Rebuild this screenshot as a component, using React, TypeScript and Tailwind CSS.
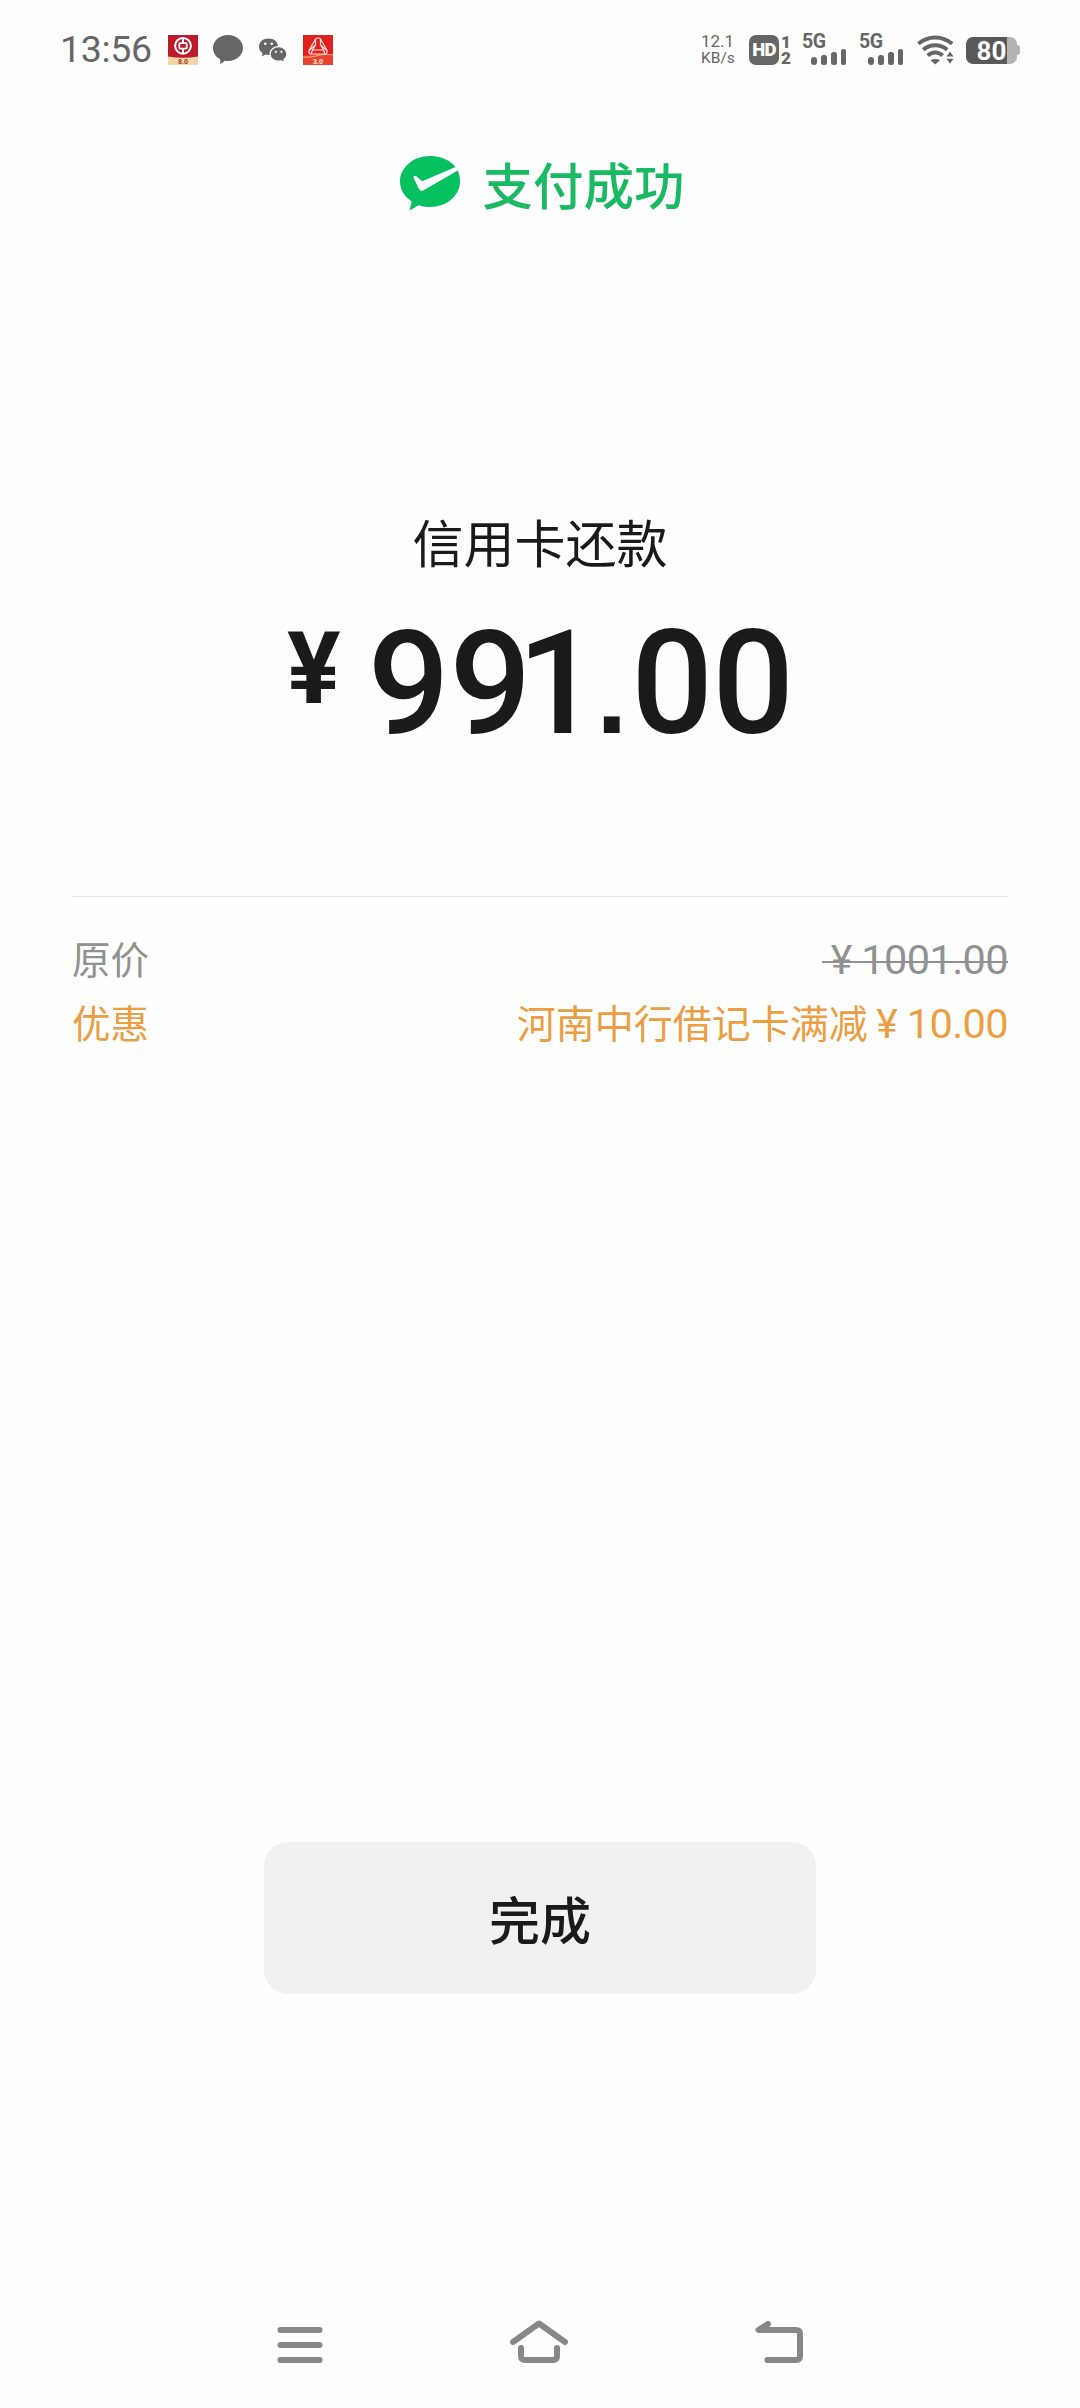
import type { ReactNode } from "react";

const cjk = "font-['Noto_Sans_CJK_SC',sans-serif]";

function BankIcon() {
  return (
    <svg width="30" height="30" viewBox="0 0 30 30" className="shrink-0">
      <rect width="30" height="30" fill="#bd1a2c" />
      <path d="M0 21.500Q15 24 30 21.500V30H0Z" fill="#f3d6a4" />
      <circle cx="15" cy="10.800" r="7.900" fill="none" stroke="#fff" strokeWidth="2" />
      <rect x="11.300" y="8.200" width="7.400" height="5.400" rx="0.800" fill="none" stroke="#fff" strokeWidth="1.800" />
      <path d="M15 3V8M15 14V18.500" stroke="#fff" strokeWidth="2" />
      <text x="15" y="28.500" textAnchor="middle" fontSize="7" fontWeight="700" fill="#a8322a" fontFamily="Roboto, sans-serif">8.0</text>
    </svg>
  );
}

function BubbleIcon() {
  return (
    <svg width="30" height="30" viewBox="0 0 30 30" className="shrink-0">
      <path d="M15 0C23.300 0 30 5.700 30 13S23.300 26 15 26C13.800 26 12.800 25.900 11.800 25.700L7.300 29.200L7.200 24.200C2.800 21.900 0 17.800 0 13C0 5.700 6.700 0 15 0Z" fill="#666" />
    </svg>
  );
}

function WeChatIcon() {
  return (
    <svg width="30" height="30" viewBox="0 0 30 30" className="shrink-0">
      <path d="M10.500 3.500C16 3.500 20 7 20 11.700S16 20 10.500 20C9.400 20 8.500 19.900 7.600 19.600L4 21.400L4.600 18.300C2.400 16.800 1 14.500 1 11.700C1 7 5 3.500 10.500 3.500Z" fill="#666" />
      <path d="M20.500 11.600C25.200 11.600 28.900 14.900 28.900 18.900C28.900 21.200 27.800 23.200 26 24.500L26.600 27.300L23.500 25.800C22.600 26.100 21.600 26.200 20.500 26.200C15.900 26.200 12 23 12 18.900S15.900 11.600 20.500 11.600Z" fill="#666" stroke="#fff" strokeWidth="1.200" />
      <g fill="#fff">
        <circle cx="7.300" cy="8.800" r="1.300" />
        <circle cx="13.800" cy="8.800" r="1.300" />
        <circle cx="17.800" cy="16.800" r="1.100" />
        <circle cx="23.400" cy="16.800" r="1.100" />
      </g>
    </svg>
  );
}

function RedAppIcon() {
  return (
    <svg width="30" height="30" viewBox="0 0 30 30" className="shrink-0">
      <rect width="30" height="30" fill="#e0201c" />
      <path d="M0 21Q15 17.500 30 21V30H0Z" fill="#e8432e" />
      <path d="M0 22Q8 22.500 15 20.500T30 20" fill="none" stroke="#f3a27c" strokeWidth="1.200" />
      <g fill="none" stroke="#ffe3dc" strokeWidth="1.200" strokeLinejoin="round">
        <path d="M12.500 4Q15 2 17.500 4L24 15.500Q24.600 18.500 22 19H8Q5.400 18.500 6 15.500Z" />
        <path d="M12.500 4V10L6 15.500M17.500 4V10L24 15.500M12.500 10L9.500 15H20.500L17.500 10M9.500 15L8 19M20.500 15L22 19" />
      </g>
      <text x="15" y="28.500" textAnchor="middle" fontSize="7" fontWeight="700" fill="#ffe6d8" fontFamily="Roboto, sans-serif">3.0</text>
    </svg>
  );
}

function HdIcon() {
  return (
    <div className="flex h-[30px] w-[42px] shrink-0 gap-[2px] text-[#666]">
      <div className="flex h-[30px] w-[30px] items-center justify-center rounded-[7px] bg-[#666] text-[18.500px] leading-none font-black tracking-[-0.800px] text-white">
        HD
      </div>
      <div className="flex flex-col items-center justify-between text-[17px] leading-[14px] font-black">
        <span>1</span>
        <span>2</span>
      </div>
    </div>
  );
}

function Signal() {
  return (
    <div className="flex h-[30px] w-[44px] shrink-0 flex-col text-[#666]">
      <span className="h-[14px] text-[19.500px] leading-[14px] font-bold tracking-[-0.500px]">5G</span>
      <div className="flex h-4 items-end gap-[4px] pl-[9px]">
        <i className="h-[8px] w-[6px] rounded-[3px] bg-[#666]" />
        <i className="h-[10px] w-[6px] rounded-[2.500px] bg-[#666]" />
        <i className="h-[13px] w-[6px] rounded-[2.500px] bg-[#666]" />
        <i className="h-[16px] w-[5px] rounded-[2px] bg-[#666]" />
      </div>
    </div>
  );
}

function WifiIcon() {
  return (
    <svg width="38" height="30" viewBox="0 0 38 30" className="shrink-0">
      <g fill="none" stroke="#666" strokeWidth="4">
        <path d="M1.300 8.700Q9 2.500 18.200 2.500T35.200 8.700" />
        <path d="M6.300 14.800Q11.500 10.200 18.200 10.200T30.200 14.800" />
        <path d="M10.800 20.600Q14 17.600 18.200 17.600T25.600 20.600" />
      </g>
      <path d="M13.500 25.300Q18.200 22.500 23 25.300L18.200 29.500Z" fill="#666" />
      <path d="M29.500 21.500L33 16.500L36.500 21.500ZM29.500 23.800H36.500L33 28.800Z" fill="#666" />
    </svg>
  );
}

function Battery() {
  return (
    <div className="flex h-[27px] w-[54px] shrink-0 items-center">
      <div className="flex h-[27px] w-[51px] items-center justify-center rounded-[7px] bg-linear-to-r from-[#595959] from-80% to-[#b3b3b3] to-80%">
        <span className="pt-[2px] text-[26px] leading-[27px] font-bold text-white">80</span>
      </div>
      <div className="h-[10px] w-[3px] rounded-r-[3px] bg-[#b3b3b3]" />
    </div>
  );
}

function PaidIcon() {
  return (
    <svg width="60" height="54" viewBox="0 0 60 54" className="shrink-0">
      <path d="M30 0C41 0 50.200 4.200 55.500 11L23.500 24.800Q22.300 25.200 21.200 24.500L16.400 20.200Q13.800 18.700 13.400 21.500L19 33Q20.800 36 23.600 34.200L57.800 14.600C59.200 18 60 21.600 60 25.500C60 39.700 46.600 51 30 51C26.400 51 23 50.500 19.900 49.500Q18.700 49.100 17.600 49.800L11 53.800Q9.500 54.300 9.900 52.700L11.300 47.300Q11.700 45.600 10.500 44.600C4 40 0 33.200 0 25.500C0 11.300 13.400 0 30 0Z" fill="#07c160" />
    </svg>
  );
}

function Row({ label, color, children }: { label: string; color: string; children: ReactNode }) {
  return (
    <div className={`flex h-16 items-center justify-between text-[39px] leading-none ${color}`}>
      <span className="text-[38.500px]">{label}</span>
      <div className="flex items-center">{children}</div>
    </div>
  );
}

function Amount({ value }: { value: string }) {
  return (
    <span className="flex items-center pt-[6px] font-[Roboto,sans-serif] text-[41.500px] tracking-[-0.600px]">
      <span className="w-[39px] pr-[1px] text-center text-[41px]">¥</span>
      <span>{value}</span>
    </span>
  );
}

export default function App() {
  return (
    <div className={`flex h-[2408px] w-[1080px] flex-col bg-[#fefefe] ${cjk} text-[#1a1a1a]`}>
      <header className="flex h-[100px] items-center justify-between px-[60px] font-[Roboto,sans-serif]">
        <div className="flex items-center gap-[15px]">
          <span className="w-[93px] text-[37.500px] leading-none tracking-[-0.300px] text-[#666]">13:56</span>
          <BankIcon />
          <BubbleIcon />
          <WeChatIcon />
          <RedAppIcon />
        </div>
        <div className="flex items-center">
          <div className="mr-[13px] w-[35px] text-[17px] leading-[17px] whitespace-nowrap text-[#666]">
            <div>12.1</div>
            <div className="text-[15.500px]">KB/s</div>
          </div>
          <HdIcon />
          <div className="ml-[11px] flex gap-[13px]">
            <Signal />
            <Signal />
          </div>
          <div className="mr-[11px] ml-[14px]">
            <WifiIcon />
          </div>
          <Battery />
        </div>
      </header>

      <div className="mt-[43px] flex h-[80px] items-center justify-center gap-[23px] pl-[4px] text-[50.500px] leading-none font-medium text-[#1aba62]">
        <PaidIcon />
        <span>支付成功</span>
      </div>

      <main className="flex flex-col items-center pt-[278px]">
        <h1 className="h-[80px] text-[51px] leading-[80px] font-normal">信用卡还款</h1>
        <div className="mt-[48px] flex h-[108px] items-start font-[Roboto,sans-serif] font-medium">
          <span className="mr-[27px] text-[100px] leading-[80px] font-bold">¥</span>
          <span className="text-[144px] leading-[110px] whitespace-nowrap">
            9<span className="tracking-[-14px]">9</span>
            <span className="tracking-[-3px]">1</span>
            <span className="mr-[4px] font-['Liberation_Sans',sans-serif] text-[112px] leading-none font-bold">.</span>
            <span className="tracking-[-1px]">00</span>
          </span>
        </div>
      </main>

      <section className="mx-[72px] mt-[159px] border-t border-[#e3e3e3] pt-[28px]">
        <Row label="原价" color="text-[#919191]">
          <span className="relative">
            <Amount value="1001.00" />
            <span className="absolute top-[28px] right-0 left-0 h-[2px] bg-[#919191]" />
          </span>
        </Row>
        <Row label="优惠" color="text-[#eb9e42]">
          <span>河南中行借记卡满减</span>
          <Amount value="10.00" />
        </Row>
      </section>

      <button className="mx-auto mt-auto h-[152px] w-[552px] rounded-[24px] bg-[#f1f1f1] text-[51px] font-medium">
        完成
      </button>

      <nav className="mt-[286px] flex h-[128px] items-center justify-between pr-[276px] pb-[4px] pl-[277px]">
        <svg width="46" height="44" viewBox="0 0 46 44" fill="none" stroke="#888" strokeWidth="6" strokeLinecap="round">
          <path d="M3.500 10H42.500M3.500 25H42.500M3.500 40H42.500" />
        </svg>
        <svg width="58" height="44" viewBox="0 0 58 44" fill="none" stroke="#888" strokeWidth="6" strokeLinecap="round" strokeLinejoin="round">
          <path d="M3 22L29 3.500L55 22M11 28V36Q11 40 15 40H43Q47 40 47 36V28" />
        </svg>
        <svg width="49" height="44" viewBox="0 0 49 44" fill="none" stroke="#888" strokeWidth="6" strokeLinecap="round" strokeLinejoin="round">
          <path d="M13 4L3.500 10H41Q45 10 45 14V36Q45 40 41 40H12.500" />
        </svg>
      </nav>
    </div>
  );
}
